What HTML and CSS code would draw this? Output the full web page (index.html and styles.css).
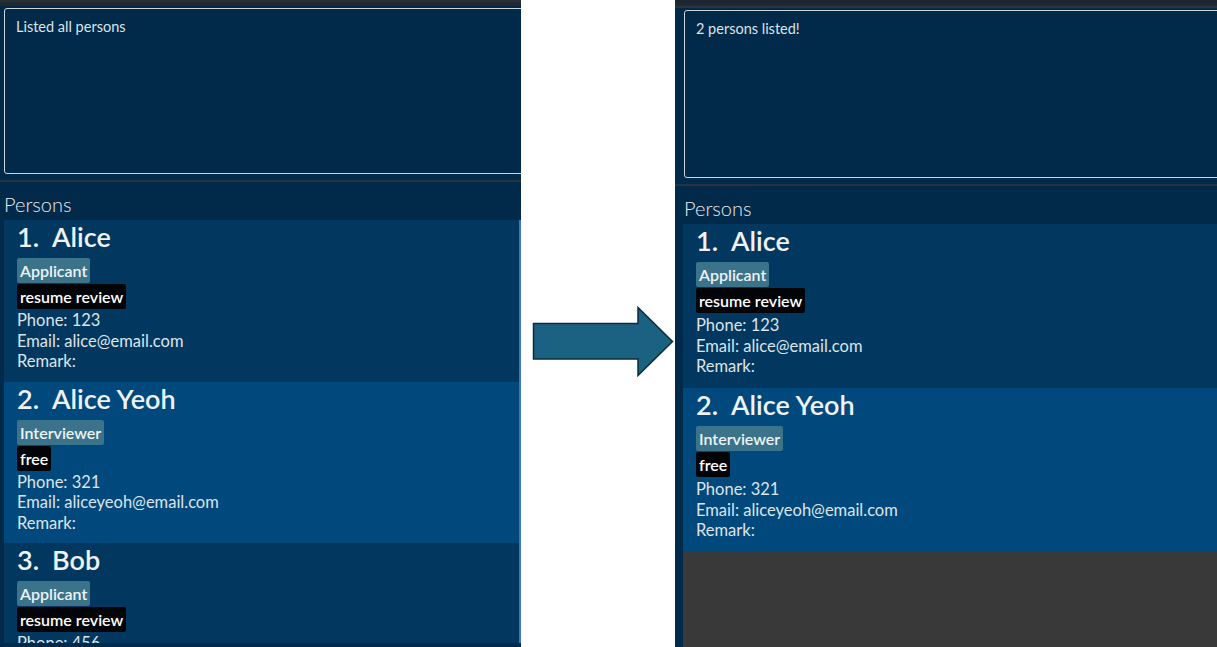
FILE: index.html
```html
<!DOCTYPE html>
<html>
<head>
<meta charset="utf-8">
<link rel="stylesheet" href="styles.css">
</head>
<body>
<div class="stage">
  <div class="panel panel-left">
    <div class="topbar"></div>
    <div class="result"><div class="result-box">Listed all persons</div></div>
    <div class="sep"></div>
    <div class="list-title">Persons</div>
    <div class="list">
      <div class="cards">
        <div class="card odd">
          <div class="name"><span class="idx">1.</span><span>Alice</span></div>
          <div class="tags"><span class="tag role">Applicant</span></div>
          <div class="tags"><span class="tag status">resume review</span></div>
          <div class="detail">Phone: 123</div>
          <div class="detail">Email: alice@email.com</div>
          <div class="detail">Remark:</div>
        </div>
        <div class="card even">
          <div class="name"><span class="idx">2.</span><span>Alice Yeoh</span></div>
          <div class="tags"><span class="tag role">Interviewer</span></div>
          <div class="tags"><span class="tag status">free</span></div>
          <div class="detail">Phone: 321</div>
          <div class="detail">Email: aliceyeoh@email.com</div>
          <div class="detail">Remark:</div>
        </div>
        <div class="card odd">
          <div class="name"><span class="idx">3.</span><span>Bob</span></div>
          <div class="tags"><span class="tag role">Applicant</span></div>
          <div class="tags"><span class="tag status">resume review</span></div>
          <div class="detail">Phone: 456</div>
          <div class="detail">Email: bob@email.com</div>
          <div class="detail">Remark:</div>
        </div>
      </div>
      <div class="scroll-strip"></div>
    </div>
  </div>

  <div class="gap">
    <svg class="arrow" width="142" height="71" viewBox="0 0 142 71">
      <polygon points="1.5,17.5 106,17.5 106,1.5 140.5,35.5 106,69.5 106,53 1.5,53" fill="#1a6182" stroke="#0c2c3d" stroke-width="1.5" stroke-linejoin="miter"/>
    </svg>
  </div>

  <div class="panel panel-right">
    <div class="topbar"></div>
    <div class="result"><div class="result-box">2 persons listed!</div></div>
    <div class="sep"></div>
    <div class="list-title">Persons</div>
    <div class="list">
      <div class="cards">
        <div class="card odd">
          <div class="name"><span class="idx">1.</span><span>Alice</span></div>
          <div class="tags"><span class="tag role">Applicant</span></div>
          <div class="tags"><span class="tag status">resume review</span></div>
          <div class="detail">Phone: 123</div>
          <div class="detail">Email: alice@email.com</div>
          <div class="detail">Remark:</div>
        </div>
        <div class="card even">
          <div class="name"><span class="idx">2.</span><span>Alice Yeoh</span></div>
          <div class="tags"><span class="tag role">Interviewer</span></div>
          <div class="tags"><span class="tag status">free</span></div>
          <div class="detail">Phone: 321</div>
          <div class="detail">Email: aliceyeoh@email.com</div>
          <div class="detail">Remark:</div>
        </div>
      </div>
    </div>
  </div>
</div>
</body>
</html>
```

FILE: styles.css
```css
* { box-sizing: border-box; }

body {
  margin: 0;
  background: #ffffff;
  font-family: Lato, "Liberation Sans", sans-serif;
}

.stage {
  display: flex;
  width: 1217px;
  height: 647px;
  overflow: hidden;
}

.panel {
  flex: none;
  height: 647px;
  overflow: hidden;
  background: #01294a;
  display: flex;
  flex-direction: column;
}

.panel-left { width: 521px; padding-left: 4px; }
.panel-right { width: 542px; padding-left: 8px; }

.topbar {
  flex: none;
  height: 6px;
  margin-left: -10px;
  background: #1f2833;
  border-top: 2px solid #2a2f35;
}

.panel-right .topbar {
  height: 8px;
  border-top: 3px solid #1c2530;
  border-bottom: 2px solid #2e3338;
}

.result {
  flex: none;
  padding-top: 2px;
}

.result-box {
  width: 700px;
  height: 166px;
  border: 1px solid #cfd4d8;
  border-radius: 3px;
  background: #012a4a;
  color: #dde3e8;
  font-size: 14.5px;
  padding: 9px 11px;
  line-height: 18px;
}

.panel-right .result-box {
  margin-left: 1px;
  height: 168px;
}

.sep {
  flex: none;
  height: 2px;
  margin-top: 6px;
  margin-left: -10px;
  background: #26323e;
}

.list-title {
  flex: none;
  height: 38px;
  padding-top: 9px;
  font-size: 20px;
  font-weight: 300;
  line-height: 26px;
  color: #e6eaee;
}

.panel-right .list-title { margin-left: 1px; }

.list {
  flex: 1;
  display: flex;
  margin-bottom: 4px;
  overflow: hidden;
}

.panel-right .list {
  margin-bottom: 0;
  background: #393939;
}

.cards {
  flex: 1;
  display: flex;
  flex-direction: column;
}

.scroll-strip {
  flex: none;
  width: 2px;
  background: #3a7bb2;
}

.card {
  flex: none;
  padding: 0 13px 10px;
  color: #dfe5ea;
}

.panel-right .card { padding-bottom: 11.5px; }
.panel-right .tags + .detail { margin-top: 2px; }

.card.odd { background: #02385f; }
.card.even { background: #01497c; }

.name {
  display: flex;
  gap: 13px;
  font-size: 27px;
  font-weight: 600;
  line-height: 34px;
  color: #f0f2f4;
}

.tags {
  display: flex;
  margin-top: 1px;
}

.name + .tags { margin-top: 4px; }

.tag {
  display: block;
  font-size: 16px;
  font-weight: 600;
  line-height: 19px;
  padding: 3px 3px;
  border-radius: 2px;
  color: #ffffff;
}

.tag.role { background: #3a738a; color: #eef3f6; }
.tag.status { background: #020407; }

.tags + .detail { margin-top: 1px; }

.detail {
  font-size: 16.5px;
  line-height: 20.5px;
  color: #dde4ea;
}

.gap {
  flex: none;
  width: 154px;
  background: #ffffff;
}

.arrow {
  display: block;
  margin: 306px 0 0 11px;
}
```
